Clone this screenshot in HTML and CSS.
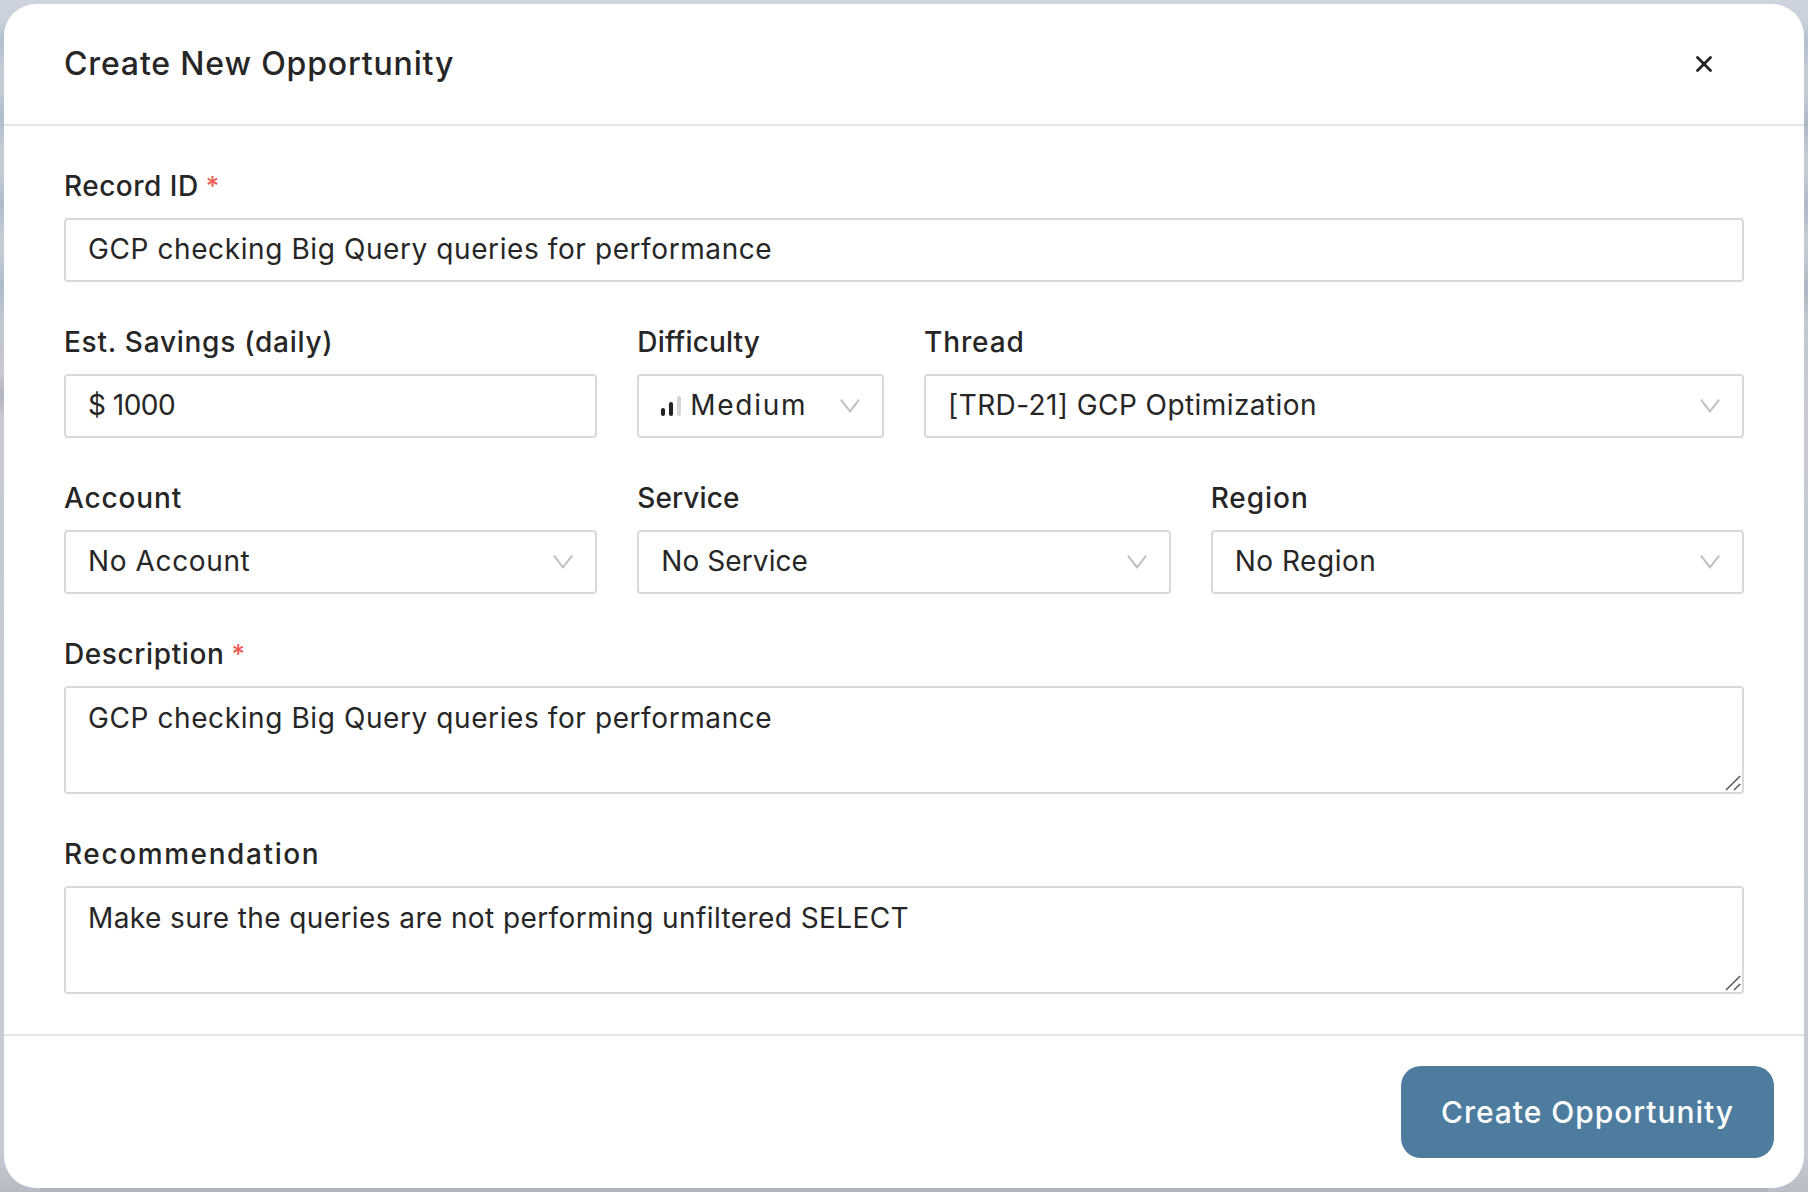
FILE: index.html
```html
<!DOCTYPE html>
<html lang="en">
<head>
<meta charset="utf-8">
<title>Create New Opportunity</title>
<link rel="stylesheet" href="styles.css">
</head>
<body>
<svg class="sprite" aria-hidden="true">
  <symbol id="chevron" viewBox="0 0 20 14"><path d="M.9 .6L10 12.4L19.1 .6" fill="none" stroke="#bfbfbf" stroke-width="1.9"/></symbol>
  <symbol id="grip" viewBox="0 0 16 16"><path d="M1 15L15.2 1M9 15L15.2 9" fill="none" stroke="#555" stroke-width="1.5"/></symbol>
</svg>
<div class="modal" role="dialog">
  <header class="modal-header">
    <h1 class="title">Create New Opportunity</h1>
    <button class="close" aria-label="Close">
      <svg width="16" height="16" viewBox="0 0 16 16"><path d="M1.5 1.5L14.5 14.5M14.5 1.5L1.5 14.5" fill="none" stroke="#222" stroke-width="2.8" stroke-linecap="round"/></svg>
    </button>
  </header>

  <main class="form">
    <div class="field span-6">
      <div class="label"><span class="t-record">Record ID</span><span class="required">*</span></div>
      <div class="control"><span class="t-gcp">GCP checking Big Query queries for performance</span></div>
    </div>

    <div class="field span-2">
      <div class="label"><span class="t-savings">Est. Savings (daily)</span></div>
      <div class="control"><span class="t-amount">$ 1000</span></div>
    </div>
    <div class="field">
      <div class="label"><span class="t-difficulty">Difficulty</span></div>
      <div class="control">
        <svg class="bars" width="20" height="20" viewBox="0 0 20 20"><rect x="0" y="12" width="4" height="8" rx="2" fill="#222"/><rect x="8" y="6" width="4" height="14" rx="2" fill="#222"/><rect x="16" y="0" width="4" height="20" rx="2" fill="#d6d6d6"/></svg>
        <span class="t-medium">Medium</span>
        <svg class="chevron"><use href="#chevron"/></svg>
      </div>
    </div>
    <div class="field span-3">
      <div class="label"><span class="t-thread">Thread</span></div>
      <div class="control"><span class="t-trd">[TRD-21] GCP Optimization</span><svg class="chevron"><use href="#chevron"/></svg></div>
    </div>

    <div class="field span-2">
      <div class="label"><span class="t-account">Account</span></div>
      <div class="control"><span class="t-no-account">No Account</span><svg class="chevron"><use href="#chevron"/></svg></div>
    </div>
    <div class="field span-2">
      <div class="label"><span class="t-service">Service</span></div>
      <div class="control"><span class="t-service">No Service</span><svg class="chevron"><use href="#chevron"/></svg></div>
    </div>
    <div class="field span-2">
      <div class="label"><span class="t-region">Region</span></div>
      <div class="control"><span class="t-no-region">No Region</span><svg class="chevron"><use href="#chevron"/></svg></div>
    </div>

    <div class="field span-6">
      <div class="label"><span class="t-description">Description</span><span class="required">*</span></div>
      <div class="control area"><span class="t-gcp">GCP checking Big Query queries for performance</span><svg class="grip"><use href="#grip"/></svg></div>
    </div>
    <div class="field span-6">
      <div class="label"><span class="t-recommendation">Recommendation</span></div>
      <div class="control area"><span class="t-select">Make sure the queries are not performing unfiltered SELECT</span><svg class="grip"><use href="#grip"/></svg></div>
    </div>
  </main>

  <footer class="modal-footer">
    <button class="submit">Create Opportunity</button>
  </footer>
</div>
</body>
</html>
```
FILE: styles.css
```css
* { box-sizing: border-box; }

body {
  margin: 0;
  height: 1192px;
  padding: 4px;
  overflow: hidden;
  font-family: "Inter", sans-serif;
  font-size: 28px;
  color: #262626;
  background:
    linear-gradient(to top, #afb4bc 0, #afb4bc 4px, transparent 4px) 40px 0 / 1728px 100% no-repeat,
    linear-gradient(#ced5de, #ced5de) 30px 0 / 1748px 4px no-repeat,
    linear-gradient(#ced4de 0, #c8d2dc 22px, #b2becb 42px, #c3cbd6 70px, #c3cbd7 95px, #adb7c4 124px, #c3ccd5 155px, #c1cad4 180px, #aeb8c6 205px, #c0cbd4 235px, #bfcad4 260px, #adb6c3 288px, #bfcad2 320px, #c3c8d1 360px, #c9cbd4 450px, #c3c9d2 510px, #c5c9d3 700px, #c7cbd4 1150px, #b8bdc6 1192px) right / 50% 100% no-repeat,
    linear-gradient(#ced4de 0, #c8d2dc 20px, #b1bfce 40px, #c4ccd7 70px, #c3cbd6 90px, #afbccb 115px, #c3ccd5 150px, #c2cbd4 175px, #aebacb 203px, #c2ccd5 235px, #c0cad4 260px, #adbaca 284px, #bfc9d1 320px, #c2c5ce 350px, #c8cad2 372px, #b1b5c1 395px, #c9cbd4 420px, #c9cbd3 465px, #c2c9cf 510px, #c5cad4 640px, #c7cbd4 1150px, #b5bac3 1192px);
}

.sprite { display: none; }

.modal {
  display: flex;
  flex-direction: column;
  width: 1800px;
  height: 1184px;
  background: #fff;
  border-radius: 32px;
}

.modal-header {
  display: flex;
  align-items: center;
  justify-content: space-between;
  height: 122px;
  padding: 0 92px 0 60px;
  border-bottom: 2px solid #e4e5ea;
}

.title {
  margin: 0;
  padding-bottom: 2px;
  font-size: 32px;
  font-weight: 500;
  letter-spacing: .84px;
}

.close {
  display: flex;
  padding: 0;
  border: 0;
  background: none;
}

.form {
  display: grid;
  grid-template-columns: repeat(6, 1fr);
  column-gap: 40px;
  row-gap: 38px;
  align-content: start;
  height: 908px;
  padding: 38px 60px 0;
}

.field {
  display: flex;
  flex-direction: column;
  gap: 10px;
}

.span-2 { grid-column: span 2; }
.span-3 { grid-column: span 3; }
.span-6 { grid-column: span 6; }

.label {
  display: flex;
  gap: 7px;
  height: 44px;
  line-height: 45px;
  font-weight: 500;
  white-space: nowrap;
}

.required {
  color: #ee5a52;
  font-size: 26px;
  line-height: 43px;
}

.control {
  position: relative;
  display: flex;
  align-items: center;
  height: 64px;
  padding: 0 22px 2px;
  border: 2px solid #d9d9d9;
  border-radius: 4px;
  white-space: nowrap;
}

.area {
  align-items: flex-start;
  height: 108px;
  padding-top: 8px;
  line-height: 44px;
}

.chevron {
  width: 20px;
  height: 14px;
  margin: 2px 0 0 auto;
}

.bars { margin: 2px 9px 0 0; }

.grip {
  position: absolute;
  right: 1px;
  bottom: 1px;
  width: 16px;
  height: 16px;
}

.modal-footer {
  display: flex;
  align-items: flex-start;
  justify-content: flex-end;
  height: 154px;
  padding: 30px;
  border-top: 2px solid #e4e5ea;
}

.submit {
  width: 373px;
  height: 92px;
  padding: 0;
  border: 0;
  border-radius: 20px;
  background: #4d7c9f;
  color: #fff;
  font: 500 30px "Inter", sans-serif;
  letter-spacing: .95px;
}

/* Tracking per string */
.t-record { letter-spacing: .5px; }
.t-gcp { letter-spacing: .59px; }
.t-savings { letter-spacing: .74px; }
.t-amount { letter-spacing: -.52px; }
.t-difficulty { letter-spacing: .16px; }
.t-medium { letter-spacing: 1.7px; }
.t-thread { letter-spacing: .9px; }
.t-trd { letter-spacing: .42px; }
.t-account { letter-spacing: .85px; }
.t-no-account { letter-spacing: .62px; }
.t-service { letter-spacing: .08px; }
.t-region { letter-spacing: .95px; }
.t-no-region { letter-spacing: .52px; }
.t-description { letter-spacing: .6px; }
.t-recommendation { letter-spacing: 1.6px; }
.t-select { letter-spacing: .41px; }
```
